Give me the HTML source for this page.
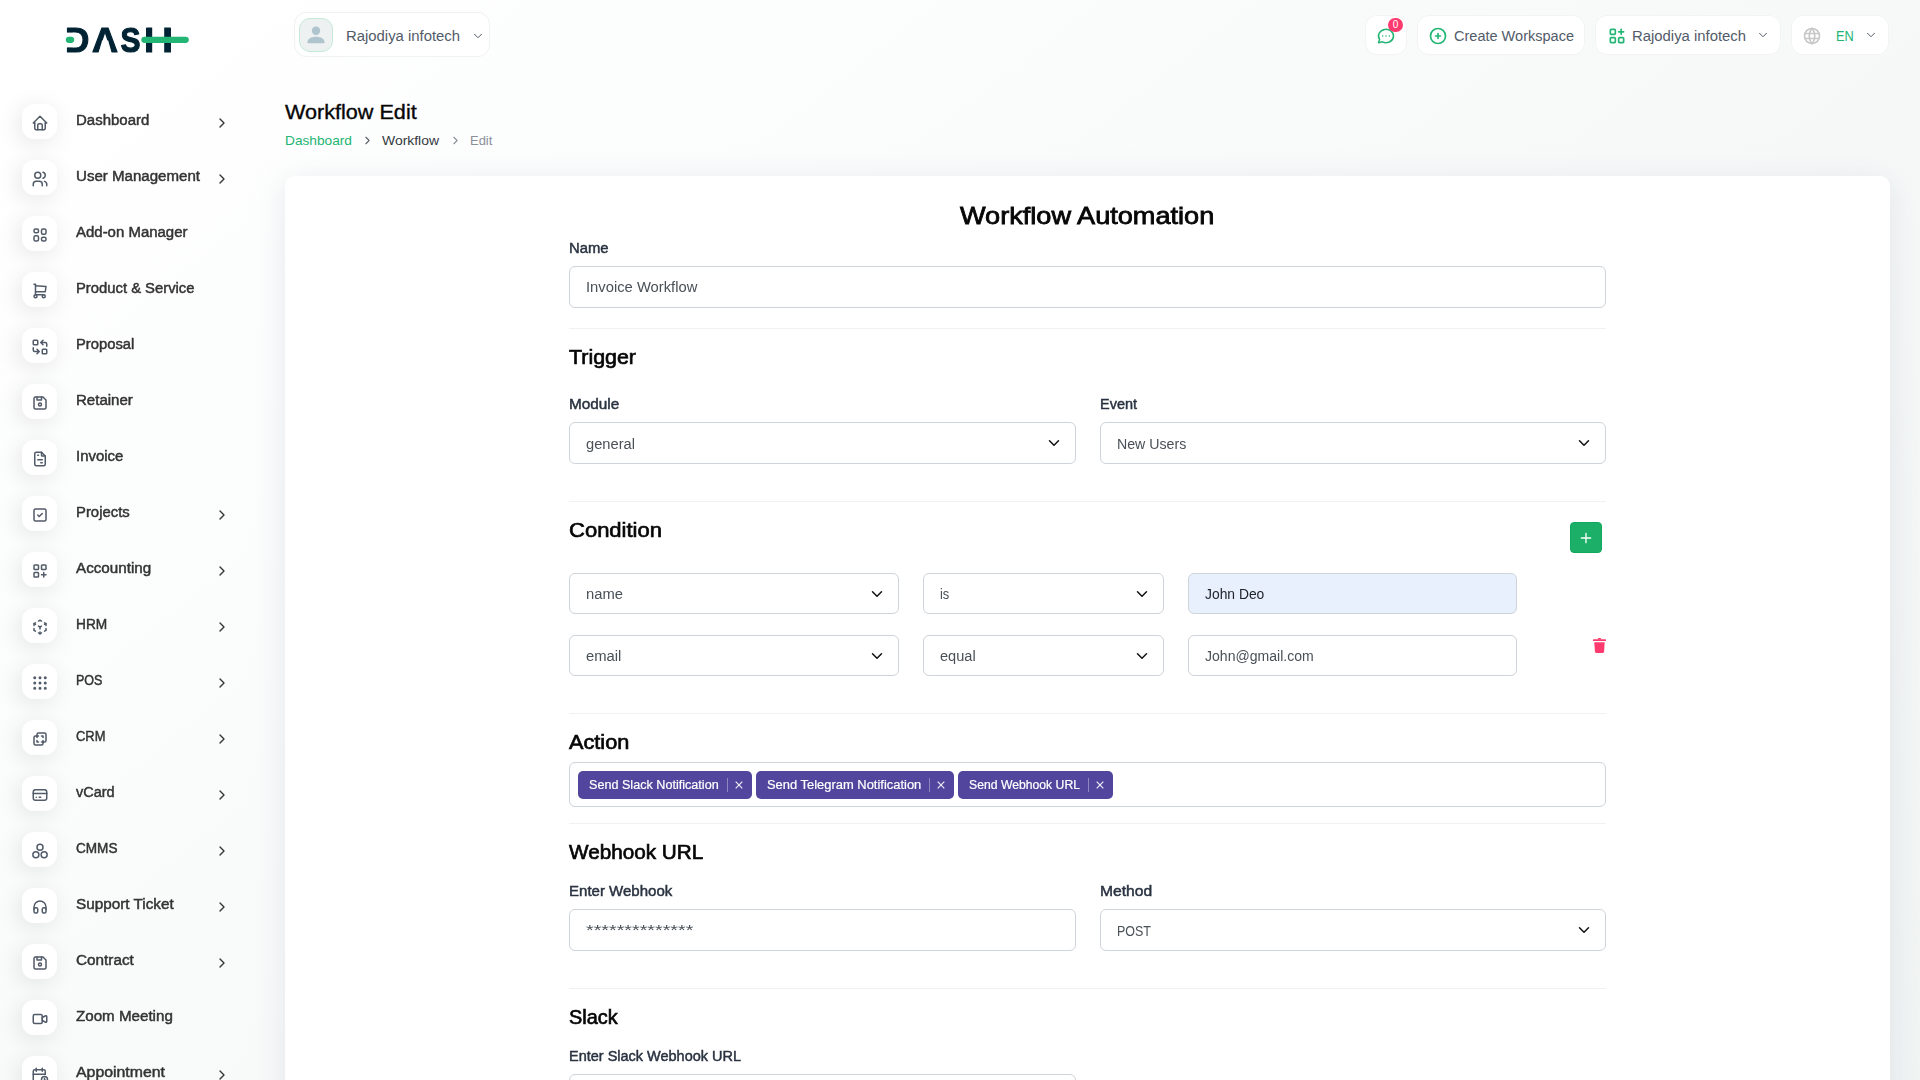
<!DOCTYPE html>
<html lang="en"><head><meta charset="utf-8"><title>Workflow Edit</title>
<style>
*{box-sizing:border-box}
html,body{margin:0;padding:0}
body{width:1920px;height:1080px;overflow:hidden;position:relative;font-family:"Liberation Sans",sans-serif;font-size:14px;color:#293240;
 background:linear-gradient(141.55deg,#ffffff 3.46%,#f0f4f3 99.86%);background-color:#f8faf9}
.abs{position:absolute}
.t{position:absolute;white-space:nowrap;line-height:1}
svg.ic{display:block;position:absolute}
/* sidebar */
.logo{position:absolute;left:60px;top:20px;width:140px;height:40px}
.nav-item{position:absolute;left:0;width:280px;height:56px}
.micon{position:absolute;left:22px;top:0;width:35px;height:35px;border-radius:12px;background:#fff;box-shadow:-3px 4px 23px rgba(0,0,0,.1)}
.micon svg.ic{left:8.75px;top:9.6px}
.mtext{position:absolute;left:76px;top:8px;-webkit-text-stroke:.45px #333;color:#333;font-size:14px;line-height:17px;white-space:nowrap}
.marrow{position:absolute;left:214px;top:11.3px}
/* header */
.hbox{position:absolute;background:#fff;border-radius:12px;box-shadow:inset 0 0 0 1px #f2f3f3}
.htext{position:absolute;white-space:nowrap;color:#525b69;font-size:14px;line-height:17px}
/* page */
.ptitle{left:285px;top:102px;font-size:20px;-webkit-text-stroke:.35px #060606;color:#060606}
.bc{top:132.5px;font-size:13px;line-height:16px}
.card{position:absolute;left:285px;top:176px;width:1605px;height:960px;background:#fff;border-radius:10px;box-shadow:0 6px 30px rgba(182,186,203,.3)}
.h4{font-size:20px;-webkit-text-stroke:.65px #060606;color:#060606;line-height:24px}
.lbl{font-size:14px;-webkit-text-stroke:.45px #293240;color:#293240;line-height:17px}
.fc{position:absolute;height:42px;border:1px solid #ced4da;border-radius:6px;background:#fff}
.fc .v{position:absolute;left:16px;top:12px;font-size:14px;line-height:17px;color:#495057;white-space:nowrap}
.fc svg.sel{position:absolute;right:13px;top:calc(50% - 6px)}
.hr{position:absolute;left:569px;width:1037px;height:1px;background:#f1f1f1}
.tag{position:absolute;top:8px;height:28px;border-radius:5px;background:#51459d;color:#fff;font-size:12px}
.tag .tx{position:absolute;top:7px;line-height:14px;white-space:nowrap;-webkit-text-stroke:.2px #fff}
.tag .dv{position:absolute;top:7px;width:1px;height:14px;background:rgba(255,255,255,.35)}
</style></head><body>

<div class="abs" id="sidebar" style="left:0;top:0;width:280px;height:1080px;will-change:transform">
<svg class="logo" viewBox="60 20 140 40"><text id="logotxt" font-family="Liberation Sans, sans-serif" font-weight="bold" font-size="35.5" fill="#002333" stroke="#002333" stroke-width="1.2" stroke-linejoin="round" y="51.9"><tspan x="65.2" textLength="24" lengthAdjust="spacingAndGlyphs">D</tspan><tspan x="92" textLength="26" lengthAdjust="spacingAndGlyphs">A</tspan><tspan x="120.5" textLength="20" lengthAdjust="spacingAndGlyphs">S</tspan><tspan x="144" textLength="29" lengthAdjust="spacingAndGlyphs">H</tspan></text><rect x="63" y="32.6" width="10.3" height="14.8" fill="#fff"/><polygon points="102.1,40.6 108.2,40.6 112,54.5 98.3,54.5" fill="#fff"/><rect x="152.2" y="24" width="12" height="31" fill="#fff"/><rect x="65.8" y="36.7" width="8.4" height="6.3" rx="3.15" fill="#22b573"/><rect x="141.3" y="36.7" width="47.5" height="6.3" rx="3.15" fill="#22b573"/></svg>
<div class="nav-item" style="top:104px"><span class="micon"><svg class="ic" width="18" height="18" viewBox="0 0 24 24" fill="none" stroke="#525b69" stroke-width="2" stroke-linecap="round" stroke-linejoin="round" style=""><polyline points="5 12 3 12 12 3 21 12 19 12"/><path d="M5 12v7a2 2 0 0 0 2 2h10a2 2 0 0 0 2 -2v-7"/><path d="M9 21v-6a2 2 0 0 1 2 -2h2a2 2 0 0 1 2 2v6"/></svg></span><span class="mtext" id="nav0" style="display:inline-block;transform-origin:0 50%;transform:scaleX(1.0701);">Dashboard</span>
<span class="marrow"><svg class="ic" width="16" height="16" viewBox="0 0 24 24" fill="none" stroke="#333" stroke-width="2" stroke-linecap="round" stroke-linejoin="round" style=""><polyline points="9 18 15 12 9 6"/></svg></span>
</div>
<div class="nav-item" style="top:160px"><span class="micon"><svg class="ic" width="18" height="18" viewBox="0 0 24 24" fill="none" stroke="#525b69" stroke-width="2" stroke-linecap="round" stroke-linejoin="round" style=""><circle cx="9" cy="7" r="4"/><path d="M3 21v-2a4 4 0 0 1 4 -4h4a4 4 0 0 1 4 4v2"/><path d="M16 3.13a4 4 0 0 1 0 7.75"/><path d="M21 21v-2a4 4 0 0 0 -3 -3.85"/></svg></span><span class="mtext" id="nav1" style="display:inline-block;transform-origin:0 50%;transform:scaleX(1.0767);">User Management</span>
<span class="marrow"><svg class="ic" width="16" height="16" viewBox="0 0 24 24" fill="none" stroke="#333" stroke-width="2" stroke-linecap="round" stroke-linejoin="round" style=""><polyline points="9 18 15 12 9 6"/></svg></span>
</div>
<div class="nav-item" style="top:216px"><span class="micon"><svg class="ic" width="18" height="18" viewBox="0 0 24 24" fill="none" stroke="#525b69" stroke-width="2" stroke-linecap="round" stroke-linejoin="round" style=""><rect x="4" y="4" width="6" height="5" rx="2"/><rect x="4" y="13" width="6" height="7" rx="2"/><rect x="14" y="4" width="6" height="7" rx="2"/><rect x="14" y="15" width="6" height="5" rx="2"/></svg></span><span class="mtext" id="nav2" style="display:inline-block;transform-origin:0 50%;transform:scaleX(1.0691);">Add-on Manager</span>
</div>
<div class="nav-item" style="top:272px"><span class="micon"><svg class="ic" width="18" height="18" viewBox="0 0 24 24" fill="none" stroke="#525b69" stroke-width="2" stroke-linecap="round" stroke-linejoin="round" style=""><circle cx="6" cy="19" r="2"/><circle cx="17" cy="19" r="2"/><path d="M17 17h-11v-14h-2"/><path d="M6 5l14 1l-1 7h-13"/></svg></span><span class="mtext" id="nav3" style="display:inline-block;transform-origin:0 50%;transform:scaleX(1.0574);">Product &amp; Service</span>
</div>
<div class="nav-item" style="top:328px"><span class="micon"><svg class="ic" width="18" height="18" viewBox="0 0 24 24" fill="none" stroke="#525b69" stroke-width="2" stroke-linecap="round" stroke-linejoin="round" style=""><rect x="3" y="3" width="6" height="6" rx="1"/><rect x="15" y="15" width="6" height="6" rx="1"/><path d="M21 11v-3a2 2 0 0 0 -2 -2h-6l3 3m0 -6l-3 3"/><path d="M3 13v3a2 2 0 0 0 2 2h6l-3 -3m0 6l3 -3"/></svg></span><span class="mtext" id="nav4" style="display:inline-block;transform-origin:0 50%;transform:scaleX(1.0549);">Proposal</span>
</div>
<div class="nav-item" style="top:384px"><span class="micon"><svg class="ic" width="18" height="18" viewBox="0 0 24 24" fill="none" stroke="#525b69" stroke-width="2" stroke-linecap="round" stroke-linejoin="round" style=""><path d="M6 4h10l4 4v10a2 2 0 0 1 -2 2h-12a2 2 0 0 1 -2 -2v-12a2 2 0 0 1 2 -2"/><circle cx="12" cy="14" r="2"/><polyline points="14 4 14 8 8 8 8 4"/></svg></span><span class="mtext" id="nav5" style="display:inline-block;transform-origin:0 50%;transform:scaleX(1.0733);">Retainer</span>
</div>
<div class="nav-item" style="top:440px"><span class="micon"><svg class="ic" width="18" height="18" viewBox="0 0 24 24" fill="none" stroke="#525b69" stroke-width="2" stroke-linecap="round" stroke-linejoin="round" style=""><path d="M14 3v4a1 1 0 0 0 1 1h4"/><path d="M17 21h-10a2 2 0 0 1 -2 -2v-14a2 2 0 0 1 2 -2h7l5 5v11a2 2 0 0 1 -2 2z"/><line x1="9" y1="7" x2="10" y2="7"/><line x1="9" y1="13" x2="15" y2="13"/><line x1="13" y1="17" x2="15" y2="17"/></svg></span><span class="mtext" id="nav6" style="display:inline-block;transform-origin:0 50%;transform:scaleX(1.0663);">Invoice</span>
</div>
<div class="nav-item" style="top:496px"><span class="micon"><svg class="ic" width="18" height="18" viewBox="0 0 24 24" fill="none" stroke="#525b69" stroke-width="2" stroke-linecap="round" stroke-linejoin="round" style=""><rect x="4" y="4" width="16" height="16" rx="2"/><path d="M9 12l2 2l4 -4"/></svg></span><span class="mtext" id="nav7" style="display:inline-block;transform-origin:0 50%;transform:scaleX(1.0617);">Projects</span>
<span class="marrow"><svg class="ic" width="16" height="16" viewBox="0 0 24 24" fill="none" stroke="#333" stroke-width="2" stroke-linecap="round" stroke-linejoin="round" style=""><polyline points="9 18 15 12 9 6"/></svg></span>
</div>
<div class="nav-item" style="top:552px"><span class="micon"><svg class="ic" width="18" height="18" viewBox="0 0 24 24" fill="none" stroke="#525b69" stroke-width="2" stroke-linecap="round" stroke-linejoin="round" style=""><rect x="4" y="4" width="6" height="6" rx="1"/><rect x="14" y="4" width="6" height="6" rx="1"/><rect x="4" y="14" width="6" height="6" rx="1"/><path d="M14 17h6m-3 -3v6"/></svg></span><span class="mtext" id="nav8" style="display:inline-block;transform-origin:0 50%;transform:scaleX(1.0854);">Accounting</span>
<span class="marrow"><svg class="ic" width="16" height="16" viewBox="0 0 24 24" fill="none" stroke="#333" stroke-width="2" stroke-linecap="round" stroke-linejoin="round" style=""><polyline points="9 18 15 12 9 6"/></svg></span>
</div>
<div class="nav-item" style="top:608px"><span class="micon"><svg class="ic" width="18" height="18" viewBox="0 0 24 24" fill="none" stroke="#525b69" stroke-width="2" stroke-linecap="round" stroke-linejoin="round" style=""><path d="M6 17.6l-2 -1.1v-2.5"/><path d="M4 10v-2.5l2 -1.1"/><path d="M10 4.1l2 -1.1l2 1.1"/><path d="M18 6.4l2 1.1v2.5"/><path d="M20 14v2.5l-2 1.12"/><path d="M14 19.9l-2 1.1l-2 -1.1"/><line x1="12" y1="12" x2="14" y2="10.9"/><line x1="18" y1="8.6" x2="20" y2="7.5"/><line x1="12" y1="12" x2="12" y2="14.5"/><line x1="12" y1="18.5" x2="12" y2="21"/><path d="M12 12l-2 -1.12"/><line x1="6" y1="8.6" x2="4" y2="7.5"/></svg></span><span class="mtext" id="nav9" style="display:inline-block;transform-origin:0 50%;transform:scaleX(0.9783);">HRM</span>
<span class="marrow"><svg class="ic" width="16" height="16" viewBox="0 0 24 24" fill="none" stroke="#333" stroke-width="2" stroke-linecap="round" stroke-linejoin="round" style=""><polyline points="9 18 15 12 9 6"/></svg></span>
</div>
<div class="nav-item" style="top:664px"><span class="micon"><svg class="ic" width="18" height="18" viewBox="0 0 24 24" fill="none" stroke="#525b69" stroke-width="2" stroke-linecap="round" stroke-linejoin="round" style=""><circle cx="5" cy="5" r="1"/><circle cx="12" cy="5" r="1"/><circle cx="19" cy="5" r="1"/><circle cx="5" cy="12" r="1"/><circle cx="12" cy="12" r="1"/><circle cx="19" cy="12" r="1"/><circle cx="5" cy="19" r="1"/><circle cx="12" cy="19" r="1"/><circle cx="19" cy="19" r="1"/></svg></span><span class="mtext" id="nav10" style="display:inline-block;transform-origin:0 50%;transform:scaleX(0.8959);">POS</span>
<span class="marrow"><svg class="ic" width="16" height="16" viewBox="0 0 24 24" fill="none" stroke="#333" stroke-width="2" stroke-linecap="round" stroke-linejoin="round" style=""><polyline points="9 18 15 12 9 6"/></svg></span>
</div>
<div class="nav-item" style="top:720px"><span class="micon"><svg class="ic" width="18" height="18" viewBox="0 0 24 24" fill="none" stroke="#525b69" stroke-width="2" stroke-linecap="round" stroke-linejoin="round" style=""><path d="M16 16v2a2 2 0 0 1 -2 2h-8a2 2 0 0 1 -2 -2v-8a2 2 0 0 1 2 -2h2v-2a2 2 0 0 1 2 -2h8a2 2 0 0 1 2 2v8a2 2 0 0 1 -2 2h-2"/><polyline points="10 8 8 8 8 10"/><polyline points="8 14 8 16 10 16"/><polyline points="14 8 16 8 16 10"/><polyline points="16 14 16 16 14 16"/></svg></span><span class="mtext" id="nav11" style="display:inline-block;transform-origin:0 50%;transform:scaleX(0.9250);">CRM</span>
<span class="marrow"><svg class="ic" width="16" height="16" viewBox="0 0 24 24" fill="none" stroke="#333" stroke-width="2" stroke-linecap="round" stroke-linejoin="round" style=""><polyline points="9 18 15 12 9 6"/></svg></span>
</div>
<div class="nav-item" style="top:776px"><span class="micon"><svg class="ic" width="18" height="18" viewBox="0 0 24 24" fill="none" stroke="#525b69" stroke-width="2" stroke-linecap="round" stroke-linejoin="round" style=""><rect x="3" y="5" width="18" height="14" rx="3"/><line x1="3" y1="10" x2="21" y2="10"/><line x1="7" y1="15" x2="7.01" y2="15"/><line x1="11" y1="15" x2="13" y2="15"/></svg></span><span class="mtext" id="nav12" style="display:inline-block;transform-origin:0 50%;transform:scaleX(1.0359);">vCard</span>
<span class="marrow"><svg class="ic" width="16" height="16" viewBox="0 0 24 24" fill="none" stroke="#333" stroke-width="2" stroke-linecap="round" stroke-linejoin="round" style=""><polyline points="9 18 15 12 9 6"/></svg></span>
</div>
<div class="nav-item" style="top:832px"><span class="micon"><svg class="ic" width="18" height="18" viewBox="0 0 24 24" fill="none" stroke="#525b69" stroke-width="2" stroke-linecap="round" stroke-linejoin="round" style=""><circle cx="12" cy="7" r="4"/><circle cx="6.5" cy="17" r="4"/><circle cx="17.5" cy="17" r="4"/></svg></span><span class="mtext" id="nav13" style="display:inline-block;transform-origin:0 50%;transform:scaleX(0.9701);">CMMS</span>
<span class="marrow"><svg class="ic" width="16" height="16" viewBox="0 0 24 24" fill="none" stroke="#333" stroke-width="2" stroke-linecap="round" stroke-linejoin="round" style=""><polyline points="9 18 15 12 9 6"/></svg></span>
</div>
<div class="nav-item" style="top:888px"><span class="micon"><svg class="ic" width="18" height="18" viewBox="0 0 24 24" fill="none" stroke="#525b69" stroke-width="2" stroke-linecap="round" stroke-linejoin="round" style=""><rect x="4" y="13" rx="2" width="5" height="7"/><rect x="15" y="13" rx="2" width="5" height="7"/><path d="M4 15v-3a8 8 0 0 1 16 0v3"/></svg></span><span class="mtext" id="nav14" style="display:inline-block;transform-origin:0 50%;transform:scaleX(1.0916);">Support Ticket</span>
<span class="marrow"><svg class="ic" width="16" height="16" viewBox="0 0 24 24" fill="none" stroke="#333" stroke-width="2" stroke-linecap="round" stroke-linejoin="round" style=""><polyline points="9 18 15 12 9 6"/></svg></span>
</div>
<div class="nav-item" style="top:944px"><span class="micon"><svg class="ic" width="18" height="18" viewBox="0 0 24 24" fill="none" stroke="#525b69" stroke-width="2" stroke-linecap="round" stroke-linejoin="round" style=""><path d="M6 4h10l4 4v10a2 2 0 0 1 -2 2h-12a2 2 0 0 1 -2 -2v-12a2 2 0 0 1 2 -2"/><circle cx="12" cy="14" r="2"/><polyline points="14 4 14 8 8 8 8 4"/></svg></span><span class="mtext" id="nav15" style="display:inline-block;transform-origin:0 50%;transform:scaleX(1.0922);">Contract</span>
<span class="marrow"><svg class="ic" width="16" height="16" viewBox="0 0 24 24" fill="none" stroke="#333" stroke-width="2" stroke-linecap="round" stroke-linejoin="round" style=""><polyline points="9 18 15 12 9 6"/></svg></span>
</div>
<div class="nav-item" style="top:1000px"><span class="micon"><svg class="ic" width="18" height="18" viewBox="0 0 24 24" fill="none" stroke="#525b69" stroke-width="2" stroke-linecap="round" stroke-linejoin="round" style=""><path d="M15 10l4.553 -2.276a1 1 0 0 1 1.447 .894v6.764a1 1 0 0 1 -1.447 .894l-4.553 -2.276v-4z"/><rect x="3" y="6" width="12" height="12" rx="2"/></svg></span><span class="mtext" id="nav16" style="display:inline-block;transform-origin:0 50%;transform:scaleX(1.0818);">Zoom Meeting</span>
</div>
<div class="nav-item" style="top:1056px"><span class="micon"><svg class="ic" width="18" height="18" viewBox="0 0 24 24" fill="none" stroke="#525b69" stroke-width="2" stroke-linecap="round" stroke-linejoin="round" style=""><path d="M11.795 21h-6.795a2 2 0 0 1 -2 -2v-12a2 2 0 0 1 2 -2h12a2 2 0 0 1 2 2v4"/><circle cx="18" cy="18" r="4"/><path d="M15 3v4"/><path d="M7 3v4"/><path d="M3 11h16"/><path d="M18 16.496v1.504l1 1"/></svg></span><span class="mtext" id="nav17" style="display:inline-block;transform-origin:0 50%;transform:scaleX(1.1322);">Appointment</span>
<span class="marrow"><svg class="ic" width="16" height="16" viewBox="0 0 24 24" fill="none" stroke="#333" stroke-width="2" stroke-linecap="round" stroke-linejoin="round" style=""><polyline points="9 18 15 12 9 6"/></svg></span>
</div>
</div>
<div class="abs" id="header" style="left:280px;top:0;width:1640px;height:70px">
<div class="hbox" style="left:13.5px;top:12.3px;width:196px;height:45px;border:1px solid #f0f1f1;box-shadow:none">
 <span class="abs" style="left:4.5px;top:4.6px;width:34px;height:34px;border-radius:11px;background:#edf1f2;border:1px solid #c5ead8;overflow:hidden">
  <svg class="ic" style="left:0;top:0" width="32" height="32" viewBox="0 0 32 32"><circle cx="16" cy="11.700" r="4.200" fill="#b0c4ce"/><path d="M7.400 23.500c0-3.600 3.800-5.650 8.600-5.650s8.600 2.050 8.600 5.650c0 .5-.4 .8-.9 .8h-15.400c-.5 0-.9-.3-.9-.8z" fill="#b0c4ce"/></svg>
 </span>
 <span class="htext" id="h_user" style="left:51.5px;top:14.7px;display:inline-block;transform-origin:0 50%;transform:scaleX(1.0614);">Rajodiya infotech</span>
 <svg class="ic" width="14" height="14" viewBox="0 0 24 24" fill="none" stroke="#525b69" stroke-width="1.7" stroke-linecap="round" stroke-linejoin="round" style="left:176.5px;top:15.7px"><polyline points="6 9 12 15 18 9"/></svg>
</div>
<div class="hbox" style="left:1085px;top:15px;width:42px;height:40px"><svg class="ic" width="20" height="20" viewBox="0 0 24 24" fill="none" stroke="#22b573" stroke-width="1.8" stroke-linecap="round" stroke-linejoin="round" style="left:11.15px;top:10.8px"><path d="M3 20l1.3 -3.9a9 8 0 1 1 3.4 2.9l-4.7 1"/><line x1="12" y1="12" x2="12" y2="12.01"/><line x1="8" y1="12" x2="8" y2="12.01"/><line x1="16" y1="12" x2="16" y2="12.01"/></svg>
 <span class="abs" style="left:23px;top:3px;width:15px;height:14px;border-radius:7px;background:#ff3a6e;color:#fff;font-size:10px;line-height:14px;text-align:center">0</span></div>
<div class="hbox" style="left:1137px;top:15px;width:168px;height:40px"><svg class="ic" width="20" height="20" viewBox="0 0 24 24" fill="none" stroke="#22b573" stroke-width="2" stroke-linecap="round" stroke-linejoin="round" style="left:11.3px;top:10.9px"><circle cx="12" cy="12" r="9"/><line x1="9" y1="12" x2="15" y2="12"/><line x1="12" y1="9" x2="12" y2="15"/></svg>
 <span class="htext" id="h_cw" style="left:36.7px;top:13px;display:inline-block;transform-origin:0 50%;transform:scaleX(1.0373);">Create Workspace</span></div>
<div class="hbox" style="left:1315px;top:15px;width:186px;height:40px"><svg class="ic" width="20" height="20" viewBox="0 0 24 24" fill="none" stroke="#22b573" stroke-width="2" stroke-linecap="round" stroke-linejoin="round" style="left:11.5px;top:10.9px"><rect x="4" y="4" width="6" height="6" rx="1"/><rect x="4" y="14" width="6" height="6" rx="1"/><rect x="14" y="14" width="6" height="6" rx="1"/><line x1="14" y1="7" x2="20" y2="7"/><line x1="17" y1="4" x2="17" y2="10"/></svg>
 <span class="htext" id="h_ws" style="left:36.5px;top:13px;display:inline-block;transform-origin:0 50%;transform:scaleX(1.0614);">Rajodiya infotech</span><svg class="ic" width="14" height="14" viewBox="0 0 24 24" fill="none" stroke="#525b69" stroke-width="1.7" stroke-linecap="round" stroke-linejoin="round" style="left:161px;top:13px"><polyline points="6 9 12 15 18 9"/></svg></div>
<div class="hbox" style="left:1511px;top:15px;width:98px;height:40px"><svg class="ic" width="20" height="20" viewBox="0 0 24 24" fill="none" stroke="#c8c8c8" stroke-width="2" stroke-linecap="round" stroke-linejoin="round" style="left:11.2px;top:11px"><circle cx="12" cy="12" r="9"/><line x1="3.6" y1="9" x2="20.4" y2="9"/><line x1="3.6" y1="15" x2="20.4" y2="15"/><path d="M11.5 3a17 17 0 0 0 0 18"/><path d="M12.5 3a17 17 0 0 1 0 18"/></svg>
 <span class="htext" id="h_en" style="left:44.5px;top:13px;color:#22b573;display:inline-block;transform-origin:0 50%;transform:scaleX(0.9099);">EN</span><svg class="ic" width="14" height="14" viewBox="0 0 24 24" fill="none" stroke="#525b69" stroke-width="1.7" stroke-linecap="round" stroke-linejoin="round" style="left:73px;top:13.4px"><polyline points="6 9 12 15 18 9"/></svg></div>
</div>
<div class="t ptitle" id="ptitle" style="display:inline-block;transform-origin:0 50%;transform:scaleX(1.0805);">Workflow Edit</div>
<div class="t bc" id="bc1" style="left:285px;color:#22b573;display:inline-block;transform-origin:0 50%;transform:scaleX(1.0533);">Dashboard</div>
<svg class="ic" width="13" height="13" viewBox="0 0 24 24" fill="none" stroke="#5b626b" stroke-width="2" stroke-linecap="round" stroke-linejoin="round" style="left:360.5px;top:133.500px"><polyline points="9 18 15 12 9 6"/></svg>
<div class="t bc" id="bc2" style="left:382px;color:#333a40;display:inline-block;transform-origin:0 50%;transform:scaleX(1.0711);">Workflow</div>
<svg class="ic" width="13" height="13" viewBox="0 0 24 24" fill="none" stroke="#8a9099" stroke-width="2" stroke-linecap="round" stroke-linejoin="round" style="left:448.5px;top:133.500px"><polyline points="9 18 15 12 9 6"/></svg>
<div class="t bc" id="bc3" style="left:470px;color:#8a9099;display:inline-block;transform-origin:0 50%;transform:scaleX(0.9953);">Edit</div>
<div class="card"></div>
<div class="t" id="wtitle" style="left:960px;top:202px;font-size:24px;line-height:28px;-webkit-text-stroke:.8px #060606;color:#060606;display:inline-block;transform-origin:0 50%;transform:scaleX(1.1302);">Workflow Automation</div>
<div class="t lbl" id="l_name" style="left:569px;top:240px;display:inline-block;transform-origin:0 50%;transform:scaleX(1.0600);">Name</div>
<div class="fc" style="left:569px;top:266px;width:1037px;height:42px;"><span class="v" id="v_name" style="display:inline-block;transform-origin:0 50%;transform:scaleX(1.0553);">Invoice Workflow</span></div>
<div class="hr" style="top:328px"></div>
<div class="t h4" id="h_trigger" style="left:569px;top:345px;display:inline-block;transform-origin:0 50%;transform:scaleX(1.0701);">Trigger</div>
<div class="t lbl" id="l_module" style="left:569px;top:396px;display:inline-block;transform-origin:0 50%;transform:scaleX(1.0953);">Module</div>
<div class="t lbl" id="l_event" style="left:1100px;top:396px;display:inline-block;transform-origin:0 50%;transform:scaleX(1.0332);">Event</div>
<div class="fc" style="left:569px;top:422px;width:507px;height:42px;"><span class="v" id="v_module" style="top:13px;display:inline-block;transform-origin:0 50%;transform:scaleX(1.0492);">general</span><svg class="sel" width="16" height="12" viewBox="0 0 16 16" preserveAspectRatio="xMidYMid meet"><path fill="none" stroke="#111" stroke-linecap="round" stroke-linejoin="round" stroke-width="2" d="M2 5l6 6 6-6"/></svg></div>
<div class="fc" style="left:1100px;top:422px;width:506px;height:42px;"><span class="v" id="v_event" style="top:13px;display:inline-block;transform-origin:0 50%;transform:scaleX(1.0121);">New Users</span><svg class="sel" width="16" height="12" viewBox="0 0 16 16" preserveAspectRatio="xMidYMid meet"><path fill="none" stroke="#111" stroke-linecap="round" stroke-linejoin="round" stroke-width="2" d="M2 5l6 6 6-6"/></svg></div>
<div class="hr" style="top:501px"></div>
<div class="t h4" id="h_cond" style="left:569px;top:518px;display:inline-block;transform-origin:0 50%;transform:scaleX(1.1004);">Condition</div>
<div class="abs" style="left:1570px;top:522px;width:32px;height:31px;border-radius:4px;background:#1caf67;border:1px solid #10a95f"><svg class="ic" style="left:9px;top:8.500px" width="12" height="12" viewBox="0 0 12 12"><path d="M6 1.350v9.300M1.350 6h9.300" stroke="#fff" stroke-width="1.330" stroke-linecap="round" fill="none"/></svg></div>
<div class="fc" style="left:569px;top:573px;width:330px;height:41px;"><span class="v" id="v_c1a" style="display:inline-block;transform-origin:0 50%;transform:scaleX(1.0562);">name</span><svg class="sel" width="16" height="12" viewBox="0 0 16 16" preserveAspectRatio="xMidYMid meet"><path fill="none" stroke="#111" stroke-linecap="round" stroke-linejoin="round" stroke-width="2" d="M2 5l6 6 6-6"/></svg></div>
<div class="fc" style="left:923px;top:573px;width:241px;height:41px;"><span class="v" id="v_c1b" style="display:inline-block;transform-origin:0 50%;transform:scaleX(0.9185);">is</span><svg class="sel" width="16" height="12" viewBox="0 0 16 16" preserveAspectRatio="xMidYMid meet"><path fill="none" stroke="#111" stroke-linecap="round" stroke-linejoin="round" stroke-width="2" d="M2 5l6 6 6-6"/></svg></div>
<div class="fc" style="left:1188px;top:573px;width:329px;height:41px;background:#e8f0fe;"><span class="v" id="v_c1c" style="color:#212529;display:inline-block;transform-origin:0 50%;transform:scaleX(0.9894);">John Deo</span></div>
<div class="fc" style="left:569px;top:635px;width:330px;height:41px;"><span class="v" id="v_c2a" style="display:inline-block;transform-origin:0 50%;transform:scaleX(1.0577);">email</span><svg class="sel" width="16" height="12" viewBox="0 0 16 16" preserveAspectRatio="xMidYMid meet"><path fill="none" stroke="#111" stroke-linecap="round" stroke-linejoin="round" stroke-width="2" d="M2 5l6 6 6-6"/></svg></div>
<div class="fc" style="left:923px;top:635px;width:241px;height:41px;"><span class="v" id="v_c2b" style="display:inline-block;transform-origin:0 50%;transform:scaleX(1.0419);">equal</span><svg class="sel" width="16" height="12" viewBox="0 0 16 16" preserveAspectRatio="xMidYMid meet"><path fill="none" stroke="#111" stroke-linecap="round" stroke-linejoin="round" stroke-width="2" d="M2 5l6 6 6-6"/></svg></div>
<div class="fc" style="left:1188px;top:635px;width:329px;height:41px;"><span class="v" id="v_c2c" style="display:inline-block;transform-origin:0 50%;transform:scaleX(1.0030);">John@gmail.com</span></div>
<svg class="ic" style="left:1592px;top:637px" width="15" height="17" viewBox="0 0 15 17" fill="#ff3a6e"><path d="M5.400 2.400L6.200 1.300Q6.400 1 6.800 1H8.200Q8.600 1 8.800 1.300L9.600 2.400Z"/><rect x="1" y="2.200" width="13" height="1.850" rx=".6"/><path d="M2.300 5.200H12.700L12.100 14.600Q12 15.900 10.800 15.900H4.200Q3 15.900 2.900 14.600Z"/></svg>
<div class="hr" style="top:713px"></div>
<div class="t h4" id="h_action" style="left:569px;top:730px;display:inline-block;transform-origin:0 50%;transform:scaleX(1.0847);">Action</div>
<div class="fc" style="left:569px;top:762px;width:1037px;height:45px">
<span class="tag" style="left:8px;width:174px"><span class="tx" id="tag0" style="left:11px;display:inline-block;transform-origin:0 50%;transform:scaleX(1.0510);">Send Slack Notification</span><span class="dv" style="left:149px"></span><svg class="ic" style="left:157px;top:10px" width="8" height="8" viewBox="0 0 8 8"><path d="M.7 .7l6.600 6.600M7.300 .7l-6.600 6.600" stroke="#fff" stroke-width="1.200" fill="none" opacity=".9"/></svg></span>
<span class="tag" style="left:186px;width:198px"><span class="tx" id="tag1" style="left:11px;display:inline-block;transform-origin:0 50%;transform:scaleX(1.0775);">Send Telegram Notification</span><span class="dv" style="left:173px"></span><svg class="ic" style="left:181px;top:10px" width="8" height="8" viewBox="0 0 8 8"><path d="M.7 .7l6.600 6.600M7.300 .7l-6.600 6.600" stroke="#fff" stroke-width="1.200" fill="none" opacity=".9"/></svg></span>
<span class="tag" style="left:388px;width:155px"><span class="tx" id="tag2" style="left:11px;display:inline-block;transform-origin:0 50%;transform:scaleX(1.0166);">Send Webhook URL</span><span class="dv" style="left:130px"></span><svg class="ic" style="left:138px;top:10px" width="8" height="8" viewBox="0 0 8 8"><path d="M.7 .7l6.600 6.600M7.300 .7l-6.600 6.600" stroke="#fff" stroke-width="1.200" fill="none" opacity=".9"/></svg></span>
</div>
<div class="hr" style="top:823px"></div>
<div class="t h4" id="h_webhook" style="left:569px;top:840px;display:inline-block;transform-origin:0 50%;transform:scaleX(1.0354);">Webhook URL</div>
<div class="t lbl" id="l_ewh" style="left:569px;top:883px;display:inline-block;transform-origin:0 50%;transform:scaleX(1.0732);">Enter Webhook</div>
<div class="t lbl" id="l_method" style="left:1100px;top:883px;display:inline-block;transform-origin:0 50%;transform:scaleX(1.1177);">Method</div>
<div class="fc" style="left:569px;top:909px;width:507px;height:42px;"><span class="v" id="v_wh" style="display:inline-block;transform-origin:0 50%;transform:scaleX(1.4066);">**************</span></div>
<div class="fc" style="left:1100px;top:909px;width:506px;height:42px;"><span class="v" id="v_method" style="top:13px;display:inline-block;transform-origin:0 50%;transform:scaleX(0.8918);">POST</span><svg class="sel" width="16" height="12" viewBox="0 0 16 16" preserveAspectRatio="xMidYMid meet"><path fill="none" stroke="#111" stroke-linecap="round" stroke-linejoin="round" stroke-width="2" d="M2 5l6 6 6-6"/></svg></div>
<div class="hr" style="top:988px"></div>
<div class="t h4" id="h_slack" style="left:569px;top:1005px;display:inline-block;transform-origin:0 50%;transform:scaleX(0.9937);">Slack</div>
<div class="t lbl" id="l_slack" style="left:569px;top:1048px;display:inline-block;transform-origin:0 50%;transform:scaleX(1.0345);">Enter Slack Webhook URL</div>
<div class="fc" style="left:569px;top:1074px;width:507px;height:42px;"><span class="v" id="v_slack" style=""></span></div>
</body></html>
